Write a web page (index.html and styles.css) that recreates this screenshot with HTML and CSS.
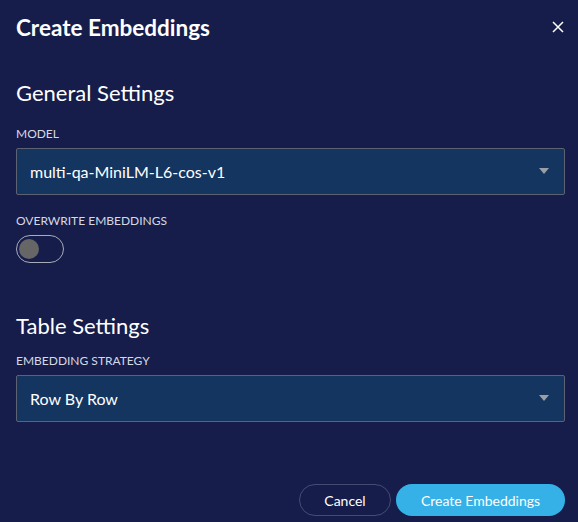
FILE: index.html
```html
<!DOCTYPE html>
<html lang="en">
<head>
<meta charset="UTF-8"/>
<meta name="viewport" content="width=device-width, initial-scale=1.0"/>
<title>Create Embeddings</title>
<link rel="stylesheet" href="styles.css">
</head>
<body>

<div class="dialog">
  <div class="head">
    <h1>Create Embeddings</h1>
    <button class="close" aria-label="Close">
      <svg width="12" height="12" viewBox="0 0 12 12"><path d="M1 1L11 11M11 1L1 11" stroke="#fff" stroke-width="1.5"/></svg>
    </button>
  </div>

  <section class="general">
    <h2>General Settings</h2>
    <label class="field-label">Model</label>
    <div class="select">
      <span>multi-qa-MiniLM-L6-cos-v1</span>
      <span class="arrow"></span>
    </div>

    <label class="field-label over">Overwrite Embeddings</label>
    <div class="toggle"><span class="knob"></span></div>
  </section>

  <section class="table">
    <h2>Table Settings</h2>
    <label class="field-label">Embedding Strategy</label>
    <div class="select">
      <span>Row By Row</span>
      <span class="arrow"></span>
    </div>
  </section>

  <div class="actions">
    <button class="btn cancel">Cancel</button>
    <button class="btn primary">Create Embeddings</button>
  </div>
</div>

</body>
</html>
```

FILE: styles.css
```css
body {
  margin:0; background:#161d4b; color:#fff;
  font-family: Lato, "Open Sans", sans-serif;
}
.dialog { padding:0 13px 0 16px; height:522px; box-sizing:border-box; display:flex; flex-direction:column; }
.head {
  display:flex; justify-content:space-between; align-items:center;
  height:54px;
}
h1 { margin:0; font-size:22.5px; font-weight:700; }
.close {
  background:none; border:none; padding:0; cursor:pointer;
  width:14px; height:14px; display:flex; align-items:center; justify-content:center;
}
h2 { margin:0; font-size:22px; font-weight:400; line-height:26px; }
.general { padding-top:26px; }
.table { padding-top:50px; }
.field-label {
  display:block; text-transform:uppercase; font-size:12px;
  color:#d6d8e2; margin-top:21px; margin-bottom:7px; line-height:14px;
}
.field-label.over { margin-top:19px; margin-bottom:7px; }
.table .field-label { margin-top:15px; }
.select {
  height:47px; box-sizing:border-box; width:549px;
  background:#13355f; border:1px solid #5c6272; border-radius:2px;
  display:flex; align-items:center; justify-content:space-between;
  padding:0 15px 0 13px; font-size:16px;
}
.arrow {
  width:0; height:0;
  border-left:5px solid transparent; border-right:5px solid transparent;
  border-top:6px solid #9a9ea8; margin-top:-1px;
}
.toggle {
  width:48px; height:28px; box-sizing:border-box;
  border:1.5px solid #a8abb8; border-radius:14px;
  display:flex; align-items:center; padding-left:2px;
}
.knob { width:20px; height:20px; border-radius:50%; background:#666; }
.actions {
  margin-top:auto; margin-bottom:6px;
  display:flex; justify-content:flex-end; gap:5px; width:549px;
}
.btn {
  height:32px; border-radius:16px; font-family:inherit; font-size:14px;
  color:#fff; cursor:pointer;
}
.cancel { width:92px; background:none; border:1px solid #454c73; }
.primary { width:169px; background:#35b1e8; border:none; }
```
